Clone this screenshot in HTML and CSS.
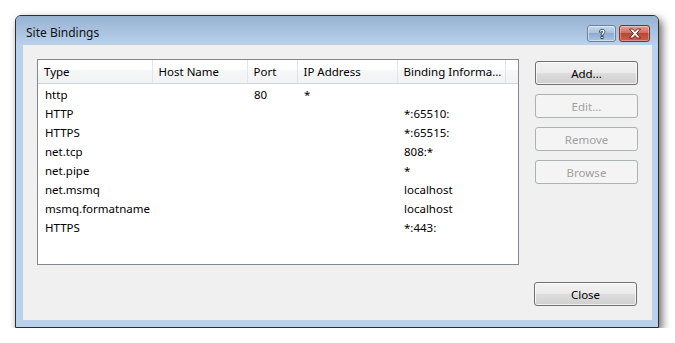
FILE: index.html
```html
<!DOCTYPE HTML>
<html>

<head>
    <meta charset="utf-8">
    <title>Site Bindings</title>
    <link rel="stylesheet" href="styles.css">
</head>

<body>
    <div class="window">
        <div class="titlebar">
            <span class="title">Site Bindings</span>
            <div class="caption">
                <span class="cap help">
                    <svg width="12" height="12" viewBox="0 0 12 12">
                        <path d="M3.3 4.2 C3.3 2.2 4.6 1.3 6.1 1.3 C7.8 1.3 8.9 2.3 8.9 3.7 C8.9 5.3 7.2 5.6 7.2 7.3 L4.9 7.3 C4.9 5.2 6.6 4.9 6.6 3.8 C6.6 3.3 6.4 3.1 6.0 3.1 C5.6 3.1 5.5 3.5 5.5 4.2 Z M4.9 8.4 L7.2 8.4 L7.2 10.6 L4.9 10.6 Z" fill="#fff" stroke="#2d3f55" stroke-width="0.9" stroke-linejoin="round"/>
                    </svg>
                </span>
                <span class="cap close">
                    <svg width="14" height="11" viewBox="0 0 14 11">
                        <path d="M1.5 1 L4.8 1 L7 3.6 L9.2 1 L12.5 1 L8.7 5.5 L12.5 10 L9.2 10 L7 7.4 L4.8 10 L1.5 10 L5.3 5.5 Z" fill="#fff" stroke="#5a1f1a" stroke-width="0.9" stroke-linejoin="round"/>
                    </svg>
                </span>
            </div>
        </div>
        <div class="frame">
            <div class="client">
                <div class="main">
                    <div class="list">
                        <table class="grid">
                            <colgroup>
                                <col class="c-type">
                                <col class="c-host">
                                <col class="c-port">
                                <col class="c-ip">
                                <col class="c-bind">
                                <col>
                            </colgroup>
                            <thead>
                                <tr>
                                    <th>Type</th>
                                    <th>Host Name</th>
                                    <th>Port</th>
                                    <th>IP Address</th>
                                    <th>Binding Informa...</th>
                                    <th class="filler"></th>
                                </tr>
                            </thead>
                            <tbody>
                                <tr><td>http</td><td></td><td>80</td><td>*</td><td></td><td></td></tr>
                                <tr><td>HTTP</td><td></td><td></td><td></td><td>*:65510:</td><td></td></tr>
                                <tr><td>HTTPS</td><td></td><td></td><td></td><td>*:65515:</td><td></td></tr>
                                <tr><td>net.tcp</td><td></td><td></td><td></td><td>808:*</td><td></td></tr>
                                <tr><td>net.pipe</td><td></td><td></td><td></td><td>*</td><td></td></tr>
                                <tr><td>net.msmq</td><td></td><td></td><td></td><td>localhost</td><td></td></tr>
                                <tr><td>msmq.formatname</td><td></td><td></td><td></td><td>localhost</td><td></td></tr>
                                <tr><td>HTTPS</td><td></td><td></td><td></td><td>*:443:</td><td></td></tr>
                            </tbody>
                        </table>
                    </div>
                    <div class="actions">
                        <button class="btn">Add...</button>
                        <button class="btn" disabled>Edit...</button>
                        <button class="btn" disabled>Remove</button>
                        <button class="btn" disabled>Browse</button>
                    </div>
                </div>
                <div class="footer">
                    <button class="btn">Close</button>
                </div>
            </div>
        </div>
    </div>
</body>

</html>
```

FILE: styles.css
```css
html, body {
    margin: 0;
    padding: 0;
    background: #fff;
}
body {
    font-family: "Noto Sans", "Open Sans", sans-serif;
    font-size: 11.5px;
    color: #000;
}
.window {
    box-sizing: border-box;
    width: 644px;
    height: 313px;
    margin: 15px 0 0 15px;
    border: 1px solid #2b2f33;
    border-radius: 6px 6px 0 0;
    background: #b9d1ea;
    box-shadow: 3px 4px 9px rgba(0, 0, 0, .6);
    display: flex;
    flex-direction: column;
}
.titlebar {
    height: 29px;
    border-radius: 5px 5px 0 0;
    background: linear-gradient(#97b2d2, #afc8e4 70%, #b9d1ea);
    display: flex;
    align-items: flex-start;
    justify-content: space-between;
}
.title {
    padding: 9px 0 0 10px;
    line-height: 16px;
    font-size: 12px;
    color: #111;
}
.caption {
    display: flex;
    gap: 3px;
    padding: 9px 8px 0 0;
}
.cap {
    box-sizing: border-box;
    height: 17px;
    border-radius: 3px;
    display: flex;
    align-items: center;
    justify-content: center;
}
.help {
    width: 29px;
    border: 1px solid #6b819c;
    background: linear-gradient(#c9d9ec, #a9c1de 45%, #8faccf 50%, #aac4e2);
    box-shadow: inset 0 0 0 1px rgba(255, 255, 255, .45);
}
.close {
    width: 31px;
    border: 1px solid #7a3129;
    background: linear-gradient(#e1a393, #cf6e5d 45%, #bd4432 50%, #c8604a);
    box-shadow: inset 0 0 0 1px rgba(255, 255, 255, .35);
}
.frame {
    flex: 1;
    padding: 0 6px 7px 7px;
    display: flex;
}
.client {
    flex: 1;
    background: #f0f0f0;
    padding: 14px 14px 14px 14px;
    display: flex;
    flex-direction: column;
}
.main {
    display: flex;
    gap: 16px;
}
.list {
    box-sizing: border-box;
    width: 482px;
    height: 206px;
    border: 1px solid #828790;
    background: #fff;
    overflow: hidden;
}
.grid {
    width: 100%;
    border-collapse: collapse;
    table-layout: fixed;
}
.c-type { width: 114px; }
.c-host { width: 95px; }
.c-port { width: 50px; }
.c-ip { width: 100px; }
.c-bind { width: 108px; }
.grid th {
    height: 23px;
    padding: 0 0 0 6px;
    font-weight: normal;
    text-align: left;
    white-space: nowrap;
    overflow: hidden;
    background: linear-gradient(#fff, #fff 40%, #f6f7f8 45%, #f1f2f4);
    border-right: 1px solid #e3e5e8;
    border-bottom: 1px solid #d5d5d5;
}
.grid th.filler {
    border-right: none;
}
.grid td {
    height: 19px;
    padding: 0 0 0 7px;
    line-height: 19px;
    white-space: nowrap;
    overflow: visible;
}
.grid tbody tr:first-child td {
    padding-top: 1px;
}
.actions {
    width: 103px;
    padding-top: 2px;
    display: flex;
    flex-direction: column;
    gap: 9px;
}
.btn {
    box-sizing: border-box;
    width: 103px;
    height: 24px;
    padding: 0;
    font: inherit;
    color: #000;
    border: 1px solid #707070;
    border-radius: 3px;
    background: linear-gradient(#f2f2f2, #ebebeb 48%, #dddddd 52%, #cfcfcf);
    box-shadow: inset 0 0 0 1px rgba(255, 255, 255, .7);
}
.btn:disabled {
    color: #a0a0a0;
    border-color: #adb2b5;
    background: #f4f4f4;
    box-shadow: none;
}
.footer {
    margin-top: auto;
    display: flex;
    justify-content: flex-end;
    padding-right: 1px;
}
```
